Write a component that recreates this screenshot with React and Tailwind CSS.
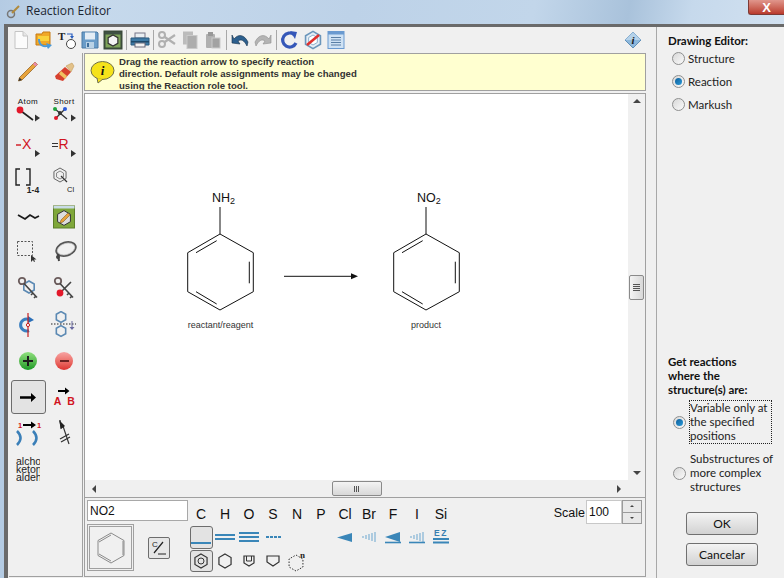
import React from "react";

const bondBlue = "#3a86b8";

function Svg({ w = 20, h = 20, children }) {
  return (
    <svg width={w} height={h} viewBox={`0 0 ${w} ${h}`} className="block shrink-0">
      {children}
    </svg>
  );
}

function Hexagon({ cx, cy, r, stroke = "#333", width = 1, fill = "none", dash }) {
  const pts = [0, 1, 2, 3, 4, 5]
    .map((i) => {
      const a = (Math.PI / 3) * i - Math.PI / 2;
      return `${cx + r * Math.cos(a)},${cy + r * Math.sin(a)}`;
    })
    .join(" ");
  return <polygon points={pts} stroke={stroke} strokeWidth={width} fill={fill} strokeDasharray={dash} />;
}

/* Toolbar icons */
const NewDoc = () => (
  <Svg>
    <path d="M4 1.5h8l4.5 4.5v12.5H4z" fill="#fbfbfb" stroke="#c4c4c4" />
    <path d="M12 1.5V6h4.5" fill="#e6e6e6" stroke="#c4c4c4" />
  </Svg>
);
const OpenFile = () => (
  <Svg>
    <path d="M2 4h6l1-2h7v13H2z" fill="#f0a828" stroke="#c67a14" />
    <path d="M4 6h11v5H4z" fill="#f9d23c" />
    <path d="M6 9c0 5 3 7 7 6l-1-2 6 2-4 4-1-2c-6 1-9-3-9-8z" fill="#4a9ad8" />
  </Svg>
);
const TextRing = () => (
  <Svg>
    <text x="1" y="10" fontSize="11" fontWeight="700" fontFamily="Liberation Serif, serif" fill="#222">T</text>
    <path d="M10 4h5l0 3" stroke="#2a5fc0" strokeWidth="1.2" fill="none" />
    <path d="M13 6h4l-2 3z" fill="#2a5fc0" />
    <circle cx="14" cy="14" r="4.5" fill="#fff" stroke="#444" />
  </Svg>
);
const Save = () => (
  <Svg>
    <path d="M2 2h15l1 1v15H2z" fill="#6a9cc8" stroke="#4a7ba6" />
    <rect x="5" y="2.5" width="10" height="7" fill="#e4edf5" />
    <rect x="6" y="12" width="8" height="6" fill="#b9d2e6" />
    <rect x="7" y="13" width="2" height="4" fill="#3f6f9c" />
  </Svg>
);
const Template = () => (
  <Svg>
    <rect x="1.5" y="1.5" width="17" height="17" fill="#7fa45a" stroke="#3a4a3a" strokeWidth="2" />
    <rect x="2" y="2" width="16" height="2.5" fill="#3f5044" />
    <Hexagon cx={10} cy={10.5} r={5.6} fill="#f4f4f4" stroke="#333" width={1.2} />
  </Svg>
);
const Printer = () => (
  <Svg w={20}>
    <rect x="5" y="3" width="10" height="5" fill="#e9eef2" stroke="#778" />
    <path d="M1 8h18v7H1z" fill="#3f7ba6" stroke="#2c5c80" />
    <rect x="1" y="11" width="18" height="1.5" fill="#1f4a6a" />
    <rect x="5" y="13" width="10" height="4" fill="#f3f3f3" stroke="#667" />
  </Svg>
);
const Scissors = () => (
  <Svg>
    <circle cx="5" cy="5" r="3" fill="none" stroke="#b0b0b0" strokeWidth="2" />
    <circle cx="5" cy="14" r="3" fill="none" stroke="#b0b0b0" strokeWidth="2" />
    <path d="M7 6.5 18 14M7 12.5 18 5" stroke="#b0b0b0" strokeWidth="2.2" />
  </Svg>
);
const Copy = () => (
  <Svg>
    <rect x="3" y="1.5" width="10" height="13" fill="#bcbcbc" />
    <rect x="7" y="5.5" width="10" height="13" fill="#adadad" stroke="#cacaca" />
  </Svg>
);
const Paste = () => (
  <Svg>
    <rect x="3" y="4" width="9" height="14" rx="1" fill="#b0b0b0" />
    <rect x="5" y="2" width="5" height="4" fill="#989898" />
    <rect x="9" y="8" width="8" height="10" fill="#a2a2a2" stroke="#cacaca" />
  </Svg>
);
const Undo = () => (
  <Svg>
    <path d="M4 9C8 4 14 4 18 12l-1 4C14 10 11 9 8 11l2 3-8-1 0-8z" fill="#2c5f8e" stroke="#14304a" strokeWidth="0.6" />
  </Svg>
);
const Redo = () => (
  <Svg>
    <path d="M16 9C12 4 6 4 2 12l1 4C6 10 9 9 12 11l-2 3 8-1 0-8z" fill="#b4b4b4" stroke="#8e8e8e" strokeWidth="0.6" />
  </Svg>
);
const Refresh = () => (
  <Svg>
    <path d="M14 4.5A7 7 0 1 0 16 13" fill="none" stroke="#3557b8" strokeWidth="3.2" />
    <path d="M10 1l7 1-2 7z" fill="#3557b8" />
  </Svg>
);
const ClearHex = () => (
  <Svg>
    <Hexagon cx={10} cy={10} r={8.6} fill="#e5eef6" stroke="#6b96bb" width={1.6} />
    <Hexagon cx={10} cy={10} r={5} fill="#fff" stroke="#8fb0cc" />
    <path d="M4 15 16 5" stroke="#e0302c" strokeWidth="2.6" />
  </Svg>
);
const ListWindow = () => (
  <Svg>
    <rect x="2" y="1.5" width="16" height="17" fill="#cfe2f4" stroke="#6a9ad0" />
    <rect x="2" y="1.5" width="16" height="3" fill="#6a9ad0" />
    <path d="M5 7.5h10M5 10h10M5 12.5h10M5 15h10" stroke="#5a7fa5" />
  </Svg>
);
const InfoDiamond = () => (
  <Svg w={18} h={18}>
    <path d="M9 1l8 8-8 8-8-8z" fill="#8db8dc" stroke="#5f8fb8" />
    <path d="M9 1l8 8H1z" fill="#b5d2ea" />
    <text x="9" y="13" textAnchor="middle" fontSize="11" fontStyle="italic" fontWeight="700" fontFamily="Liberation Serif, serif" fill="#1b1b1b">i</text>
  </Svg>
);

/* Left palette icons */
const Pencil = () => (
  <div className="mb-[4px]">
    <Svg w={24} h={24}>
      <path d="M19 3l2.500 2.500L6 21l-3.500 1 1-3.500z" fill="#e8a33a" stroke="#8c5a1a" strokeWidth="0.7" />
      <path d="M19 3l2.500 2.500-2 2L17 5z" fill="#e889a5" />
      <path d="M6 21l-3.500 1 1-3.500z" fill="#333" />
    </Svg>
  </div>
);
const Eraser = () => (
  <Svg w={24} h={24}>
    <path d="M14 5l6-3 2 3-3 6z" fill="#e3c28a" stroke="#c39a5a" strokeWidth="0.6" />
    <path d="M13 6l6 5-8 9-7-2-1-3z" fill="#d7402e" />
    <path d="M9 10l6 5-2 3-6-5z" fill="#f0c060" />
  </Svg>
);
const Tri = ({ x, y }) => <path d={`M${x} ${y}l5 3.500-5 3.500z`} fill="#333" />;
const AtomTool = () => (
  <Svg w={30} h={30}>
    <text x="15" y="10" textAnchor="middle" fontSize="8" letterSpacing="0.4" fontFamily="Liberation Sans, sans-serif" fill="#111">Atom</text>
    <path d="M8 17l12 9" stroke="#222" strokeWidth="1.6" />
    <circle cx="7" cy="16" r="3.400" fill="#e3182a" />
    <Tri x={22} y={20.5} />
  </Svg>
);
const ShortTool = () => (
  <Svg w={30} h={30}>
    <text x="15" y="10" textAnchor="middle" fontSize="8" letterSpacing="0.4" fontFamily="Liberation Sans, sans-serif" fill="#111">Short</text>
    <path d="M6 15l12 10M7 24l9-9" stroke="#333" strokeWidth="1.300" />
    <circle cx="6" cy="15" r="2" fill="#22a33b" />
    <circle cx="16" cy="15" r="2" fill="#2a58d8" />
    <circle cx="7" cy="24" r="2" fill="#e3182a" />
    <circle cx="11" cy="19" r="2" fill="#333" />
    <Tri x={22} y={20.5} />
  </Svg>
);
const XTool = () => (
  <Svg w={30} h={26}>
    <path d="M3 13h5" stroke="#d0141e" strokeWidth="1.400" />
    <text x="9" y="17" fontSize="14" fontFamily="Liberation Sans, sans-serif" fill="#d0141e">X</text>
    <Tri x={22} y={18} />
  </Svg>
);
const RTool = () => (
  <Svg w={30} h={26}>
    <path d="M3 11.500h6M3 14.500h6" stroke="#333" />
    <text x="9.500" y="17" fontSize="14" fontFamily="Liberation Sans, sans-serif" fill="#d0141e">R</text>
    <Tri x={22} y={18} />
  </Svg>
);
const Bracket = () => (
  <Svg w={30} h={28}>
    <path d="M7 2H3v16h4M13 2h4v16h-4" fill="none" stroke="#222" strokeWidth="1.400" />
    <text x="20" y="26" textAnchor="middle" fontSize="8.500" fontWeight="700" fontFamily="Liberation Sans, sans-serif" fill="#222">1-4</text>
  </Svg>
);
const ChainCl = () => (
  <Svg w={30} h={28}>
    <Hexagon cx={11} cy={8} r={7} stroke="#666" fill="#f0f0f0" />
    <Hexagon cx={11} cy={8} r={4} stroke="#888" />
    <path d="M12 9l6 6" stroke="#333" strokeWidth="1.200" />
    <text x="18" y="25" fontSize="7.500" fontFamily="Liberation Sans, sans-serif" fill="#222">Cl</text>
  </Svg>
);
const Wavy = () => (
  <Svg w={24} h={16}>
    <path d="M2 6l7 4 5-4 5 3 4-2" fill="none" stroke="#1b1b1b" strokeWidth="1.800" />
  </Svg>
);
const GreenEdit = () => (
  <Svg w={22} h={24}>
    <rect x="0.5" y="1" width="21" height="22" fill="#7fa73a" stroke="#5d7f2a" />
    <rect x="0.5" y="1" width="21" height="2.500" fill="#c9dce6" />
    <Hexagon cx={11} cy={13} r={7.400} fill="#ddd" stroke="#333" />
    <path d="M7 18l1-3 7-7 2 2-7 7z" fill="#e8a33a" stroke="#6b4a14" strokeWidth="0.5" />
  </Svg>
);
const Marquee = () => (
  <Svg w={24} h={26}>
    <rect x="1.500" y="1.500" width="15" height="14" fill="none" stroke="#555" strokeWidth="1" strokeDasharray="2 1.500" />
    <path d="M15 15v7l2-2 1 2 1-.6-1-2h2.500z" fill="#333" />
  </Svg>
);
const Lasso = () => (
  <Svg w={26} h={26}>
    <ellipse cx="15" cy="9" rx="10" ry="6.500" transform="rotate(-18 15 9)" fill="none" stroke="#555" strokeWidth="2" />
    <ellipse cx="15" cy="9" rx="9" ry="5.500" transform="rotate(-18 15 9)" fill="none" stroke="#ccc" strokeWidth="0.7" />
    <path d="M7 14l1 7" stroke="#444" strokeWidth="2" />
    <circle cx="7" cy="17" r="2" fill="#444" />
  </Svg>
);
const KeyHex = () => (
  <Svg w={24} h={26}>
    <Hexagon cx={13} cy={11} r={6} stroke="#5b89b3" width={1.600} />
    <circle cx="6" cy="5" r="3.200" fill="none" stroke="#6b5c5c" strokeWidth="1.800" />
    <path d="M8 7.500l13 14M17 17l-2 2M20 20l-2 2" stroke="#444" strokeWidth="1.600" />
  </Svg>
);
const KeyAtom = () => (
  <Svg w={24} h={26}>
    <circle cx="6" cy="5" r="3.200" fill="none" stroke="#6b5c5c" strokeWidth="1.800" />
    <path d="M8 7.500l13 14M17 17l-2 2M20 20l-2 2M19 6L10 15" stroke="#444" strokeWidth="1.600" />
    <circle cx="8" cy="17" r="3.400" fill="#e3182a" />
  </Svg>
);
const Rotate = () => (
  <Svg w={24} h={26}>
    <path d="M13 7.500A6 6 0 1 0 13 18.500" fill="none" stroke="#3a7fc0" strokeWidth="3" />
    <path d="M12 4l6 4-6 3z" fill="#2a6fb8" />
    <path d="M12 1v24" stroke="#c81e1e" strokeWidth="1.200" />
    <circle cx="12" cy="13" r="1.600" fill="#fff" stroke="#c81e1e" />
  </Svg>
);
const Flip = () => (
  <Svg w={26} h={28}>
    <Hexagon cx={10} cy={6} r={5.400} stroke="#5b89b3" width={1.600} />
    <Hexagon cx={10} cy={20} r={5.400} stroke="#5b89b3" width={1.600} />
    <path d="M0 13h25" stroke="#222" strokeDasharray="1.500 1.500" />
    <path d="M21 10v8" stroke="#6a6aa0" />
    <path d="M18.500 16h5l-2.500 3z" fill="#6a6aa0" />
  </Svg>
);
const Bar = () => <div className="h-[2px] w-[10px] bg-[#1c1c1c]" />;
const ArrowBold = () => (
  <svg width={16} height={9} viewBox="0 0 16 9" className="block">
    <path d="M0 3.200h11V0l5 4.500-5 4.500V5.800H0z" fill="#000" />
  </svg>
);
const ArrowAB = () => (
  <Svg w={24} h={26}>
    <path d="M6 6h7V3.500l4.500 3.500L13 10.500V8H6z" fill="#000" />
    <text x="5.500" y="21" textAnchor="middle" fontSize="10.500" fontWeight="700" fontFamily="Liberation Sans, sans-serif" fill="#d0141e">A</text>
    <text x="19" y="21" textAnchor="middle" fontSize="10.500" fontWeight="700" fontFamily="Liberation Sans, sans-serif" fill="#d0141e">B</text>
  </Svg>
);
const MapArrow = () => (
  <Svg w={28} h={26}>
    <text x="4" y="7.500" fontSize="7.500" fontWeight="700" fontFamily="Liberation Sans, sans-serif" fill="#d0141e">1</text>
    <text x="23" y="7.500" fontSize="7.500" fontWeight="700" fontFamily="Liberation Sans, sans-serif" fill="#d0141e">1</text>
    <path d="M9 4h8V1.500l5 3.500-5 3.500V6H9z" fill="#000" />
    <path d="M3 11Q10 18 3 25" fill="none" stroke="#3a7fb8" strokeWidth="2.500" />
    <path d="M19 11Q26 18 19 25" fill="none" stroke="#3a7fb8" strokeWidth="2.500" />
  </Svg>
);
const RoleArrow = () => (
  <Svg w={18} h={28}>
    <path d="M5 1l1 8 2-2 6 18" fill="none" stroke="#333" strokeWidth="1.200" />
    <path d="M4 1l6 6-4 3z" fill="#222" />
    <path d="M5 20l9-5M6 23l9-5" stroke="#333" strokeWidth="1.300" />
  </Svg>
);

/* Bottom panel icons */
const BondLine = ({ n }) => (
  <div className="flex w-[20px] flex-col gap-[2px]">
    {Array.from({ length: n }).map((_, i) => (
      <div key={i} className="h-[2px] bg-[#3a86b8]" />
    ))}
  </div>
);
const DashBond = () => (
  <div className="flex gap-[1px]">
    <div className="h-[2px] w-[3px] bg-[#3a86b8]" />
    <div className="h-[2px] w-[3px] bg-[#3a86b8]" />
    <div className="h-[2px] w-[3px] bg-[#3a86b8]" />
    <div className="h-[2px] w-[3px] bg-[#3a86b8]" />
  </div>
);
const Wedge = ({ hash, line }) => (
  <Svg w={18} h={16}>
    {hash ? (
      [3, 6, 9, 12, 15].map((x, i) => (
        <path key={x} d={`M${x} ${7 - i}v${2 * i + 2}`} stroke="#6aa6cf" />
      ))
    ) : (
      <path d={line ? "M1 8 16 3v10z" : "M1 8.500 16 4v9z"} fill={bondBlue} />
    )}
    {line && <path d="M1 13.500h16" stroke={bondBlue} strokeWidth="1.600" />}
  </Svg>
);
const EZ = () => (
  <Svg w={18} h={18}>
    <text x="9" y="8" textAnchor="middle" fontSize="8.500" fontWeight="700" letterSpacing="1.500" fontFamily="Liberation Sans, sans-serif" fill="#3a7fb0">EZ</text>
    <path d="M1 11h16M1 14.500h16" stroke={bondBlue} strokeWidth="1.800" />
  </Svg>
);
const Ring = ({ size = 14, inner }) => (
  <Svg w={18} h={18}>
    <Hexagon cx={9} cy={9} r={size / 2} stroke="#333" width={1.200} />
    {inner && <circle cx="9" cy="9" r="3" fill="none" stroke="#333" />}
  </Svg>
);
const Shield = ({ wide }) => (
  <Svg w={18} h={16}>
    <path d={wide ? "M3 3h12v6l-6 4-6-4z" : "M4 3h10v7l-5 3-5-3z"} fill="none" stroke="#333" strokeWidth="1.200" />
    {!wide && <path d="M6.500 3v5h5V3" fill="none" stroke="#333" />}
  </Svg>
);
const RingN = () => (
  <Svg w={20} h={22}>
    <Hexagon cx={9} cy={13} r={8} stroke="#333" dash="1.500 1.500" />
    <text x="13" y="8" fontSize="9" fontWeight="700" fontFamily="Liberation Serif, serif" fill="#222">n</text>
  </Svg>
);

function Sep() {
  return (
    <div className="flex w-[4px] justify-center">
      <div className="h-[20px] w-px bg-[#a8a8a8]" />
    </div>
  );
}
function Cell({ children }) {
  return <div className="flex h-[26px] w-[23px] items-center justify-center">{children}</div>;
}
function Radio({ on }) {
  return (
    <div className="flex h-[13px] w-[13px] shrink-0 items-center justify-center rounded-full border border-[#8e8f8f] bg-gradient-to-br from-[#d8d8d8] to-[#fafafa]">
      {on && <div className="h-[7px] w-[7px] rounded-full bg-gradient-to-br from-[#0d5f9c] to-[#2b9ad8]" />}
    </div>
  );
}
function RadioRow({ label, on }) {
  return (
    <div className="flex h-[23px] items-center gap-[3px] pl-[15px]">
      <Radio on={on} />
      <span>{label}</span>
    </div>
  );
}
function DialogButton({ children }) {
  return (
    <div className="flex h-[23px] w-[72px] items-center justify-center rounded-[3px] border border-[#707070] bg-gradient-to-b from-[#f4f4f4] to-[#d2d2d2] text-[12px] text-[#111]">
      {children}
    </div>
  );
}
function PaletteCell({ children, selected }) {
  return (
    <div className="flex h-[36px] w-[36px] items-center justify-center">
      {selected ? (
        <div className="flex h-[34px] w-[35px] items-center justify-center rounded-[3px] border border-[#6d6d6d] bg-[#e3e3e3]">
          {children}
        </div>
      ) : (
        children
      )}
    </div>
  );
}

function Benzene({ dx }) {
  const d = `M${220 + dx} 207V234L${253.3 + dx} 252.700V291.700L${220 + dx} 310L${187.700 + dx} 291.700V252.700L${220 + dx} 234M${196 + dx} 252.700L${216.700 + dx} 240.700M${249.300 + dx} 261.700V283.300M${196 + dx} 291.700L${216.700 + dx} 304`;
  return <path d={d} fill="none" stroke="#111" strokeWidth="1" />;
}

function Canvas() {
  return (
    <svg viewBox="85 94 543 386" className="block h-full w-full" fontFamily="Liberation Sans, sans-serif">
      <Benzene dx={0} />
      <Benzene dx={206} />
      <path d="M284 276.300H353" stroke="#111" />
      <path d="M351 273.300l7 3-7 3z" fill="#111" />
      <text x="212" y="201.500" fontSize="12.500" fill="#111">
        NH<tspan fontSize="9" dy="2">2</tspan>
      </text>
      <text x="417" y="201.500" fontSize="12.500" fill="#111">
        NO<tspan fontSize="9" dy="2">2</tspan>
      </text>
      <text x="220.500" y="328" textAnchor="middle" fontSize="9" fill="#333">reactant/reagent</text>
      <text x="426" y="328" textAnchor="middle" fontSize="9" fill="#333">product</text>
    </svg>
  );
}

function Toolbar() {
  return (
    <div className="flex h-[26px] items-center">
      <Cell><NewDoc /></Cell>
      <Cell><OpenFile /></Cell>
      <Cell><TextRing /></Cell>
      <Cell><Save /></Cell>
      <Cell><Template /></Cell>
      <Sep />
      <Cell><Printer /></Cell>
      <Sep />
      <Cell><Scissors /></Cell>
      <Cell><Copy /></Cell>
      <Cell><Paste /></Cell>
      <Sep />
      <Cell><Undo /></Cell>
      <Cell><Redo /></Cell>
      <Sep />
      <Cell><Refresh /></Cell>
      <Cell><ClearHex /></Cell>
      <Cell><ListWindow /></Cell>
      <div className="ml-auto mr-[4px]"><InfoDiamond /></div>
    </div>
  );
}

function Palette() {
  return (
    <div className="grid h-[524px] w-[74px] shrink-0 auto-rows-[36px] grid-cols-[36px_36px] content-start border-r border-b border-[#a0a0a0] bg-[#f0f0f0] pl-px pt-[2px]">
      <PaletteCell><Pencil /></PaletteCell>
      <PaletteCell><Eraser /></PaletteCell>
      <PaletteCell><AtomTool /></PaletteCell>
      <PaletteCell><ShortTool /></PaletteCell>
      <PaletteCell><XTool /></PaletteCell>
      <PaletteCell><RTool /></PaletteCell>
      <PaletteCell><Bracket /></PaletteCell>
      <PaletteCell><ChainCl /></PaletteCell>
      <PaletteCell><Wavy /></PaletteCell>
      <PaletteCell><GreenEdit /></PaletteCell>
      <PaletteCell><Marquee /></PaletteCell>
      <PaletteCell><Lasso /></PaletteCell>
      <PaletteCell><KeyHex /></PaletteCell>
      <PaletteCell><KeyAtom /></PaletteCell>
      <PaletteCell><Rotate /></PaletteCell>
      <PaletteCell><Flip /></PaletteCell>
      <PaletteCell>
        <div className="flex h-[18px] w-[18px] items-center justify-center rounded-full bg-gradient-to-b from-[#8fe07e] to-[#109a24]">
          <div className="relative flex items-center justify-center">
            <Bar />
            <div className="absolute h-[10px] w-[2px] bg-[#1c1c1c]" />
          </div>
        </div>
      </PaletteCell>
      <PaletteCell>
        <div className="flex h-[18px] w-[18px] items-center justify-center rounded-full bg-gradient-to-b from-[#f7a3a3] to-[#dc2f2f]">
          <div className="h-[2px] w-[9px] bg-[#6d2222]" />
        </div>
      </PaletteCell>
      <PaletteCell selected><ArrowBold /></PaletteCell>
      <PaletteCell><ArrowAB /></PaletteCell>
      <PaletteCell><MapArrow /></PaletteCell>
      <PaletteCell><RoleArrow /></PaletteCell>
      <PaletteCell>
        <div className="w-[24px] overflow-hidden whitespace-nowrap font-['Liberation_Sans',sans-serif] text-[10.500px] leading-[8px] text-[#222]">
          <div>alchohol</div>
          <div>ketone</div>
          <div>aldehyde</div>
        </div>
      </PaletteCell>
    </div>
  );
}

function Banner() {
  return (
    <div className="flex h-[38px] items-start overflow-hidden border border-[#a0a0a0] bg-[#ffffd0]">
      <div className="ml-0 mt-[6px] flex w-[34px] justify-center">
        <Svg w={25} h={24}>
          <ellipse cx="12.500" cy="10.500" rx="11.500" ry="9" fill="#f5e21a" stroke="#6f6f4a" />
          <path d="M7 18l1 5 5-4" fill="#f5e21a" stroke="#6f6f4a" />
          <text x="12.500" y="15" textAnchor="middle" fontSize="13" fontStyle="italic" fontWeight="700" fontFamily="Liberation Serif, serif" fill="#111">i</text>
        </Svg>
      </div>
      <div className="pt-[2px] font-['Liberation_Sans',sans-serif] text-[9.600px] leading-[12px] font-bold text-[#333]">
        <div className="whitespace-nowrap">Drag the reaction arrow to specify reaction</div>
        <div className="whitespace-nowrap">direction. Default role assignments may be changed</div>
        <div className="whitespace-nowrap">using the Reaction role tool.</div>
      </div>
    </div>
  );
}

function CanvasFrame() {
  return (
    <div className="mt-[2px] flex h-[405px] flex-col border border-[#a0a0a0] bg-white">
      <div className="flex min-h-0 flex-1">
        <div className="min-w-0 flex-1">
          <Canvas />
        </div>
        <div className="flex w-[17px] flex-col items-center justify-between bg-[#f0f0f0] py-[5px]">
          <div className="h-0 w-0 border-x-[4px] border-b-[4px] border-x-transparent border-b-[#444]" />
          <div className="flex h-[25px] w-[15px] flex-col items-center justify-center gap-[1px] rounded-[2px] border border-[#8a8a8a] bg-gradient-to-r from-[#f4f4f4] to-[#d8d8d8]">
            <div className="h-[1px] w-[7px] bg-[#555]" />
            <div className="h-[1px] w-[7px] bg-[#555]" />
            <div className="h-[1px] w-[7px] bg-[#555]" />
            <div className="h-[1px] w-[7px] bg-[#555]" />
          </div>
          <div className="h-0 w-0 border-x-[4px] border-t-[4px] border-x-transparent border-t-[#444]" />
        </div>
      </div>
      <div className="flex h-[17px] shrink-0 items-center bg-[#f0f0f0]">
        <div className="flex w-[543px] items-center justify-between px-[7px]">
          <div className="h-0 w-0 border-y-[4px] border-r-[4px] border-y-transparent border-r-[#444]" />
          <div className="flex h-[15px] w-[50px] items-center justify-center gap-[1px] rounded-[2px] border border-[#8a8a8a] bg-gradient-to-b from-[#f4f4f4] to-[#d8d8d8]">
            <div className="h-[6px] w-[1px] bg-[#555]" />
            <div className="h-[6px] w-[1px] bg-[#555]" />
            <div className="h-[6px] w-[1px] bg-[#555]" />
          </div>
          <div className="h-0 w-0 border-y-[4px] border-l-[4px] border-y-transparent border-l-[#444]" />
        </div>
      </div>
    </div>
  );
}

const elements = ["C", "H", "O", "S", "N", "P", "Cl", "Br", "F", "I", "Si"];

function ToolGrid() {
  return (
    <div className="mt-px grid grid-cols-[repeat(11,24px)] auto-rows-[24px]">
      {elements.map((el) => (
        <div key={el} className="flex items-center justify-center pt-[3px] text-[14px] text-[#111]">{el}</div>
      ))}
      <div className="flex items-center justify-center">
        <div className="flex h-[23px] w-[23px] items-end justify-center rounded-[3px] border border-[#6d6d6d] bg-[#e3e3e3] pb-[4px]"><BondLine n={1} /></div>
      </div>
      <div className="flex items-center justify-center"><BondLine n={2} /></div>
      <div className="flex items-center justify-center"><BondLine n={3} /></div>
      <div className="flex items-center justify-center"><DashBond /></div>
      <div />
      <div />
      <div className="flex items-center justify-center"><Wedge /></div>
      <div className="flex items-center justify-center"><Wedge hash /></div>
      <div className="flex items-center justify-center"><Wedge line /></div>
      <div className="flex items-center justify-center"><Wedge hash line /></div>
      <div className="flex items-center justify-center"><EZ /></div>
      <div className="flex items-center justify-center">
        <div className="flex h-[22px] w-[23px] items-center justify-center rounded-[3px] border border-[#6d6d6d] bg-[#e3e3e3]"><Ring inner /></div>
      </div>
      <div className="flex items-center justify-center"><Ring /></div>
      <div className="flex items-center justify-center"><Shield /></div>
      <div className="flex items-center justify-center"><Shield wide /></div>
      <div className="flex items-center justify-center"><RingN /></div>
    </div>
  );
}

function BottomPanel() {
  return (
    <div className="flex h-[79px] border-x border-b border-[#a0a0a0] bg-[#f0f0f0] pl-[2px] pt-[2px] font-['Liberation_Sans',sans-serif]">
      <div className="w-[102px] shrink-0">
        <div className="flex h-[21px] w-[101px] items-center border border-[#a8a8a8] bg-white pl-[2px] text-[12px] text-[#111]">NO2</div>
        <div className="mt-[3px] flex items-center">
          <div className="flex h-[47px] w-[47px] items-center justify-center border-[3px] border-double border-[#a0a0a0]">
            <svg width="36" height="36" viewBox="0 0 36 36">
              <Hexagon cx={18} cy={18} r={15} stroke="#8a8a8a" />
              <path d="M6 12l12-7M30 11v14M6 24l12 7" stroke="#8a8a8a" fill="none" />
            </svg>
          </div>
          <div className="ml-[14px] flex h-[22px] w-[22px] items-center justify-center rounded-[2px] border border-[#6d6d6d] bg-[#e6e6e6]">
            <svg width="18" height="18" viewBox="0 0 18 18">
              <text x="2" y="8" fontSize="8" fontFamily="Liberation Sans, sans-serif" fill="#222">C</text>
              <path d="M13 3 4 14M8 15h8" stroke="#222" strokeWidth="1.200" />
            </svg>
          </div>
        </div>
      </div>
      <ToolGrid />
      <div className="ml-auto mr-[3px] flex h-[24px] items-start">
        <span className="mt-[4px] mr-px text-[12.500px] text-[#111]">Scale</span>
        <div className="flex h-[24px] w-[36px] items-center border border-[#c8c8c8] bg-white pl-[2px] text-[12px] text-[#111]">100</div>
        <div className="flex h-[24px] w-[20px] flex-col border border-[#9a9a9a] bg-[#e8e8e8]">
          <div className="flex flex-1 items-center justify-center border-b border-[#9a9a9a]">
            <div className="h-0 w-0 border-x-[2px] border-b-[2px] border-x-transparent border-b-[#444]" />
          </div>
          <div className="flex flex-1 items-center justify-center">
            <div className="h-0 w-0 border-x-[2px] border-t-[2px] border-x-transparent border-t-[#444]" />
          </div>
        </div>
      </div>
    </div>
  );
}

function SidePanel() {
  return (
    <div className="flex w-[128px] flex-col border-l border-[#a8a8a8] bg-[#f0f0f0] pt-[7px] font-['Lato',sans-serif] text-[11.500px] text-[#222]">
      <div className="pl-[11px] font-bold leading-[13px] text-[#111]">Drawing Editor:</div>
      <RadioRow label="Structure" />
      <RadioRow label="Reaction" on />
      <RadioRow label="Markush" />
      <div className="mt-auto pl-[11px] font-bold leading-[14px] text-[#111]">
        <div>Get reactions</div>
        <div>where the</div>
        <div>structure(s) are:</div>
      </div>
      <div className="mt-[3px] flex items-center pl-[16px]">
        <Radio on />
        <div className="ml-[3px] w-[83px] whitespace-nowrap border border-dotted border-[#222] leading-[14px]">
          <div>Variable only at</div>
          <div>the specified</div>
          <div>positions</div>
        </div>
      </div>
      <div className="mt-[8px] flex items-center pl-[16px]">
        <Radio />
        <div className="ml-[4px] w-[83px] whitespace-nowrap leading-[14px]">
          <div>Substructures of</div>
          <div>more complex</div>
          <div>structures</div>
        </div>
      </div>
      <div className="mt-[18px] flex flex-col gap-[8px] pb-[12px] pl-[29px]">
        <DialogButton>OK</DialogButton>
        <DialogButton>Cancelar</DialogButton>
      </div>
    </div>
  );
}

export default function App() {
  return (
    <div className="flex h-[578px] w-[784px] flex-col overflow-hidden bg-[#b4cbe3]">
      {/* Title bar */}
      <div className="flex h-[24px] shrink-0 items-start justify-between bg-[linear-gradient(100deg,#b4cbe3_0%,#c6d9ec_12%,#bdd2e8_45%,#c2d6ea_68%,#a9c2db_80%,#c6d9ec_88%,#d2e1f0_100%)]">
        <div className="flex h-[22px] items-center pl-[6px] font-['Open_Sans',sans-serif] text-[12px] text-[#1c2530]">
          <svg width="15" height="15" viewBox="0 0 15 15" className="mr-[5px]">
            <circle cx="5" cy="10" r="3.500" fill="none" stroke="#777" strokeWidth="1.500" />
            <path d="M6 9l7-7" stroke="#b08a3c" strokeWidth="2" />
          </svg>
          Reaction Editor
        </div>
        <div className="flex h-[15px] w-[36px] items-center justify-center rounded-bl-[3px] border-b border-l border-[#7d3a35] bg-gradient-to-b from-[#e0968c] to-[#b9392c] font-['Liberation_Sans',sans-serif] text-[13px] leading-none font-bold text-white">
          X
        </div>
      </div>

      {/* Window body */}
      <div className="ml-[4px] flex min-h-0 flex-1 border-t-[3px] border-l-[4px] border-[#6a6a6a] bg-[#f0f0f0] pl-px">
        <div className="flex w-[637px] shrink-0 flex-col">
          <Toolbar />
          <div className="flex min-h-0 flex-1">
            <Palette />
            <div className="ml-px flex w-[562px] flex-col">
              <Banner />
              <CanvasFrame />
              <BottomPanel />
            </div>
          </div>
        </div>
        <div className="w-[10px] shrink-0" />
        <SidePanel />
      </div>
    </div>
  );
}
